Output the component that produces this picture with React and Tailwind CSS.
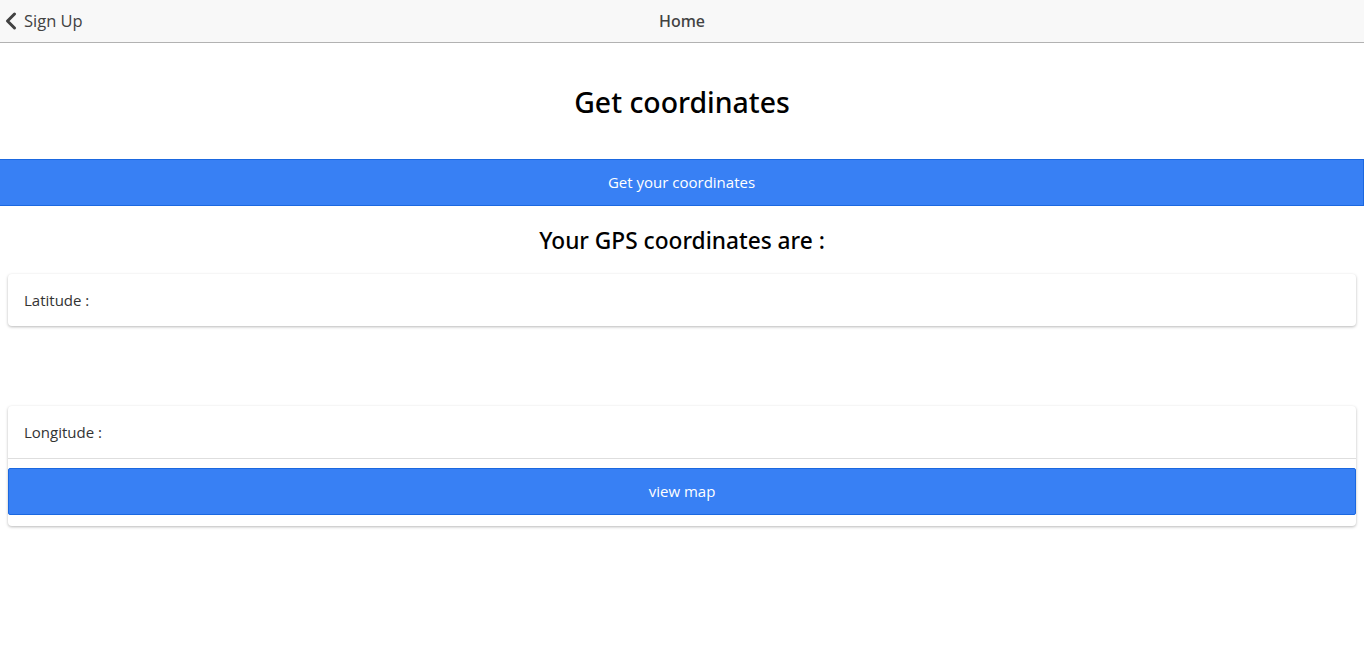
import { ChevronLeft } from "lucide-react";

const font = { fontFamily: '"Open Sans", "Noto Sans", sans-serif' };
const heading = { fontFamily: '"Noto Sans", "Open Sans", sans-serif' };

export default function App() {
  return (
    <div className="min-h-[659px] bg-white text-black" style={font}>
      {/* Toolbar */}
      <div className="relative flex h-[43px] items-center border-b border-[#b2b2b2] bg-[#f8f8f8]">
        <button className="-ml-[3px] flex items-center text-[16.5px] text-[#424242]">
          <ChevronLeft className="h-[28px] w-[28px] text-[#424242]" strokeWidth={2.6} />
          <span className="-ml-[1px]">Sign Up</span>
        </button>
        <div
          className="pointer-events-none absolute inset-x-0 text-center text-[16px] font-medium text-[#424242]"
          style={heading}
        >
          Home
        </div>
      </div>

      {/* Content */}
      <h1 className="mt-[42px] text-center text-[28.4px] font-medium leading-[34px]" style={heading}>
        Get coordinates
      </h1>

      <button className="mt-[40px] flex h-[47px] w-full items-center justify-center border border-l-0 border-[#1b68e0] bg-[#3880f4] text-[15px] text-white">
        Get your coordinates
      </button>

      <h2 className="mt-[20px] text-center text-[22.7px] font-medium leading-[30px]" style={heading}>
        Your GPS coordinates are :
      </h2>

      <div className="mx-2 mt-[18px] rounded-[4px] bg-white shadow-[0_1px_3px_rgba(0,0,0,0.28)]">
        <div className="flex h-[52px] items-center px-4 text-[15px] text-[#333]">Latitude :</div>
      </div>

      <div className="mx-2 mt-[80px] rounded-[4px] bg-white pb-[11px] shadow-[0_1px_3px_rgba(0,0,0,0.28)]">
        <div className="flex h-[53px] items-center border-b border-[#dedede] px-4 text-[15px] text-[#333]">
          Longitude :
        </div>
        <button className="mt-[9px] flex h-[47px] w-full items-center justify-center rounded-[2px] border border-[#1b68e0] bg-[#3880f4] text-[15px] text-white">
          view map
        </button>
      </div>
    </div>
  );
}
